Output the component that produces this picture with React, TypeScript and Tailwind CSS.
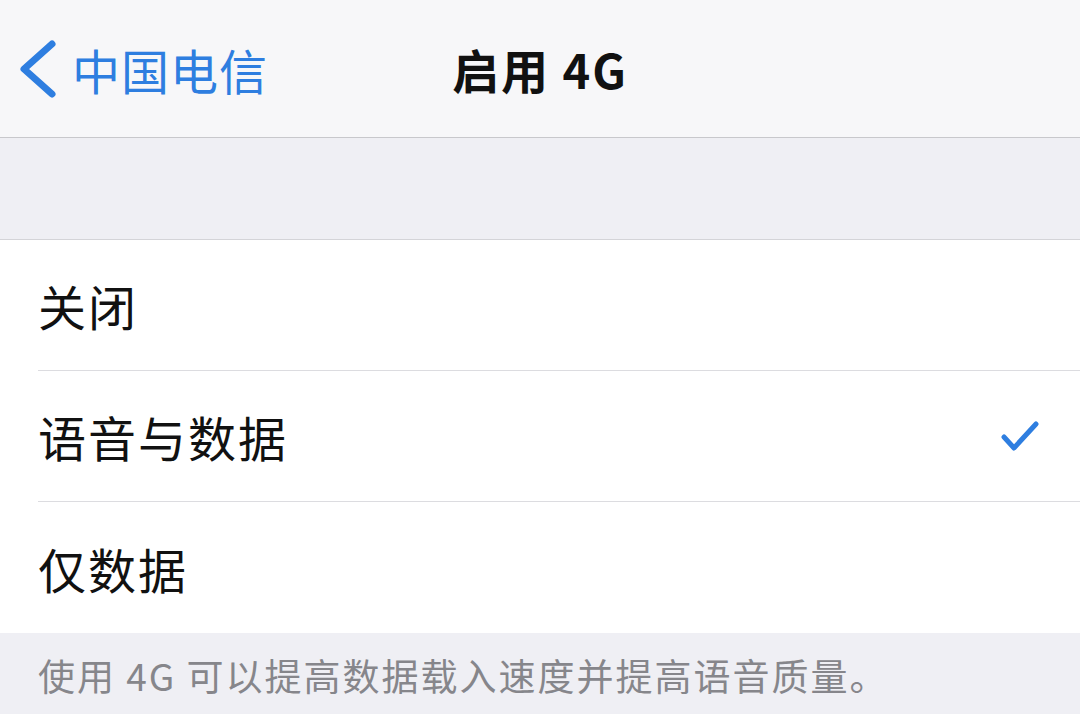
import React from "react";

const options = [
  { label: "关闭", checked: false },
  { label: "语音与数据", checked: true },
  { label: "仅数据", checked: false },
];

const font = { fontFamily: '"Noto Sans CJK SC", "Noto Sans", sans-serif' };

const App = () => {
  return (
    <div className="w-[1080px] h-[714px] overflow-hidden bg-[#efeff4]" style={font}>
      {/* nav bar */}
      <div className="relative h-[138px] bg-[#f7f7f9] border-b border-[#c8c8cc] flex items-center">
        <div className="flex items-center pl-[16px] text-[#2e7ee0]">
          <svg width="44" height="60" viewBox="0 0 44 60" className="mr-[12px]">
            <polyline
              points="36,5 8,30 36,55"
              fill="none"
              stroke="currentColor"
              strokeWidth="7"
              strokeLinecap="round"
              strokeLinejoin="round"
            />
          </svg>
          <span className="text-[48px] leading-none tracking-[1px]">中国电信</span>
        </div>
        <div className="absolute inset-0 flex items-center justify-center pointer-events-none">
          <span className="text-[47px] leading-none font-semibold tracking-[2px] text-[#111]">启用 4G</span>
        </div>
      </div>

      {/* spacer */}
      <div className="h-[101px]" />

      {/* options */}
      <div className="bg-white border-t border-[#d4d4d8] pl-[38px]">
        {options.map((o, i) => (
          <div
            key={o.label}
            className={
              "h-[131px] flex items-center pr-[40px] " +
              (i < options.length - 1 ? "border-b border-[#dcdce0]" : "")
            }
          >
            <span className="flex-1 text-[48px] leading-none tracking-[2px] text-[#111]">{o.label}</span>
            {o.checked && (
              <svg width="40" height="34" viewBox="0 0 40 34">
                <polyline
                  points="4,18 14,29 36,5"
                  fill="none"
                  stroke="#2e7ee0"
                  strokeWidth="5"
                  strokeLinecap="round"
                  strokeLinejoin="round"
                />
              </svg>
            )}
          </div>
        ))}
      </div>

      {/* footer note */}
      <div className="pl-[38px] pt-[24px]">
        <p className="text-[37px] leading-none tracking-[2px] text-[#86868b]">使用 4G 可以提高数据载入速度并提高语音质量。</p>
      </div>
    </div>
  );
};

export default App;
